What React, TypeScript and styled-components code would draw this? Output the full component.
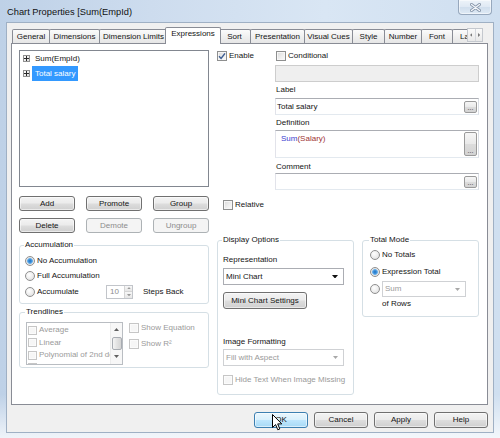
import React from "react";
import styled, { createGlobalStyle, css } from "styled-components";

const GlobalStyle = createGlobalStyle`
  html, body { margin: 0; padding: 0; background: #ffffff; }
  body {
    font-family: "Liberation Sans", Arial, sans-serif;
    font-size: 8px;
    line-height: 10px;
    color: #141414;
  }
  *, *::before, *::after { box-sizing: border-box; }
`;

const Window = styled.div`
  position: relative;
  width: 500px;
  height: 438px;
  display: flex;
  flex-direction: column;
  overflow: hidden;
  background:
    linear-gradient(180deg, rgba(255,255,255,0) 0%, rgba(255,255,255,0) 90%, rgba(255,255,255,0.75) 100%),
    linear-gradient(90deg, #bed1e7 0%, #cddcee 30%, #d9e6f4 65%, #cfdff0 100%);
`;

const TitleBar = styled.div`
  flex: none;
  height: 22px;
  display: flex;
  justify-content: space-between;
  align-items: flex-start;
  padding: 0 8px 0 7px;
`;

const TitleText = styled.span`
  font-size: 9.3px;
  line-height: 24px;
  color: #111;
`;

const CloseButton = styled.div`
  width: 34px;
  height: 15px;
  display: flex;
  align-items: center;
  justify-content: center;
  border: 1px solid #97a8bd;
  border-top: none;
  border-radius: 0 0 4px 4px;
  background: linear-gradient(180deg, #edf3f9 0%, #dfe9f4 50%, #d0deed 51%, #dfeaf5 100%);
  box-shadow: inset 0 0 0 1px rgba(255,255,255,0.5);
`;

const Client = styled.div`
  flex: 1;
  margin: 0 6px 5px 6px;
  border: 1px solid #9fb0c4;
  background: #f0f0f0;
  display: flex;
  flex-direction: column;
  padding: 4px 5px 0 4px;
`;

const TabStrip = styled.div`
  flex: none;
  height: 17px;
  margin-bottom: -1px;
  padding-left: 1px;
  display: flex;
  position: relative;
  z-index: 1;
`;

const TabList = styled.div`
  width: 455px;
  height: 17px;
  display: flex;
  align-items: flex-start;
  overflow: hidden;
`;

const Tab = styled.div<{ $w: number; $active?: boolean }>`
  flex: none;
  width: ${p => p.$w}px;
  height: 14px;
  margin-top: 2px;
  margin-right: -1px;
  border: 1px solid #898c95;
  border-bottom: none;
  border-radius: 2px 2px 0 0;
  background: linear-gradient(180deg, #fbfbfb 0%, #f0f0f0 50%, #e6e6e6 100%);
  text-align: center;
  line-height: 13px;
  white-space: nowrap;
  overflow: hidden;
  ${p => p.$active && css`
    position: relative;
    z-index: 1;
    width: ${p.$w + 4}px;
    height: 17px;
    margin: 0 -3px 0 -2px;
    background: #ffffff;
    line-height: 11px;
  `}
`;

const TabScroller = styled.div`
  flex: none;
  width: 16px;
  height: 14px;
  margin-top: 1px;
  display: flex;
  border: 1px solid #c4c8ce;
  background: linear-gradient(180deg, #fafafa, #e9e9e9);
`;

const ScrollHalf = styled.div`
  flex: 1;
  display: flex;
  align-items: center;
  justify-content: center;
  & + & { border-left: 1px solid #d4d7dc; }
`;

const TabPanel = styled.div`
  flex: none;
  height: 362px;
  border: 1px solid #898c95;
  background: #ffffff;
  padding: 6px 8px 0 7px;
  display: grid;
  grid-template-columns: 190px 137px 1fr;
  column-gap: 8px;
  row-gap: 2px;
  align-content: start;
  align-items: start;
`;

const LeftTop = styled.div`
  grid-column: 1;
  display: flex;
  flex-direction: column;
`;

const TreeBox = styled.div`
  height: 137px;
  border: 1px solid #828790;
  background: #fff;
  padding: 0 0 0 3px;
  display: flex;
  flex-direction: column;
`;

const TreeItem = styled.div`
  height: 15px;
  display: flex;
  align-items: center;
`;

const Expander = styled.span`
  flex: none;
  width: 7px;
  height: 7px;
  margin-right: 2px;
  border: 1px solid #919191;
  background: linear-gradient(135deg, #ffffff 0%, #dedede 100%);
  display: flex;
  align-items: center;
  justify-content: center;
`;

const TreeLabel = styled.span<{ $selected?: boolean }>`
  height: 15px;
  line-height: 15px;
  padding: 0 3px;
  ${p => p.$selected && css`
    background: #3399ff;
    color: #ffffff;
  `}
`;

const ButtonGrid = styled.div`
  margin-top: 9px;
  display: grid;
  grid-template-columns: repeat(3, 1fr);
  column-gap: 11px;
  row-gap: 7px;
`;

const PushButton = styled.button<{ $h?: number; $w?: number; $default?: boolean }>`
  font: inherit;
  height: ${p => p.$h ?? 15}px;
  width: ${p => (p.$w ? `${p.$w}px` : "100%")};
  padding: 0;
  border: 1px solid #707070;
  border-radius: 3px;
  color: #141414;
  background: linear-gradient(180deg, #f3f3f3 0%, #ebebeb 48%, #dddddd 52%, #cfcfcf 100%);
  box-shadow: inset 0 0 0 1px rgba(255, 255, 255, 0.55);
  position: relative;
  &:disabled {
    border-color: #adb2b5;
    background: #f4f4f4;
    color: #8c8c8c;
    box-shadow: none;
  }
  ${p => p.$default && css`
    border-color: #3c7fb1;
    background: linear-gradient(180deg, #eaf6fd 0%, #d9f0fc 48%, #bee6fd 52%, #a7d9f5 100%);
  `}
`;

const ExprColumn = styled.div`
  grid-column: 2 / 4;
  display: flex;
  flex-direction: column;
`;

const OptionRow = styled.div`
  height: 12px;
  display: grid;
  grid-template-columns: 58px 1fr;
  align-items: center;
`;

const CheckLabel = styled.label<{ $disabled?: boolean; $indent?: number }>`
  display: flex;
  align-items: center;
  gap: 2px;
  height: 10px;
  margin-left: ${p => p.$indent ?? 0}px;
  color: ${p => (p.$disabled ? "#9a9a9a" : "inherit")};
  white-space: nowrap;
`;

const CheckBox = styled.span<{ $disabled?: boolean; $size?: number }>`
  flex: none;
  width: ${p => p.$size ?? 10}px;
  height: ${p => p.$size ?? 10}px;
  border: 1px solid ${p => (p.$disabled ? "#c6c6c6" : "#8e8f8f")};
  background: ${p =>
    p.$disabled
      ? "#f6f6f6"
      : "linear-gradient(135deg, #d8d8d8 0%, #eeeeee 55%, #fbfbfb 100%)"};
  box-shadow: inset 0 0 0 1px ${p => (p.$disabled ? "#fbfbfb" : "#f6f6f6")};
  display: flex;
  align-items: center;
  justify-content: center;
`;

const FieldStack = styled.div`
  margin-left: 58px;
  display: flex;
  flex-direction: column;
`;

const DisabledField = styled.div`
  margin-top: 3px;
  height: 17px;
  border: 1px solid #cdcdcd;
  background: #efefef;
`;

const FieldLabel = styled.div<{ $mt: number }>`
  margin-top: ${p => p.$mt}px;
  height: 10px;
  padding-left: 1px;
`;

const TextField = styled.div<{ $mt: number; $h: number; $tall?: boolean }>`
  margin-top: ${p => p.$mt}px;
  height: ${p => p.$h}px;
  border: 1px solid;
  border-color: #abadb3 #dbdfe6 #e3e9ef #e2e3ea;
  background: #fff;
  display: flex;
  align-items: ${p => (p.$tall ? "stretch" : "center")};
  justify-content: space-between;
  padding: ${p => (p.$tall ? "1px 1px 1px 5px" : "0 1px 0 1px")};
`;

const FieldText = styled.span<{ $top?: number }>`
  padding-top: ${p => p.$top ?? 0}px;
  white-space: nowrap;
`;

const Keyword = styled.span`
  color: #3c3cd0;
`;

const FieldName = styled.span`
  color: #a03434;
`;

const EllipsisButton = styled.span<{ $h: number }>`
  flex: none;
  width: 13px;
  height: ${p => p.$h}px;
  align-self: center;
  border: 1px solid #9a9a9a;
  border-radius: 2px;
  background: linear-gradient(180deg, #f6f6f6 0%, #e9e9e9 50%, #dcdcdc 52%, #d3d3d3 100%);
  display: flex;
  align-items: flex-end;
  justify-content: center;
  font-size: 7px;
  line-height: 7px;
  padding-bottom: 1px;
  color: #333;
`;

const RelativeRow = styled.div`
  margin-top: 10px;
  margin-left: 6px;
`;

const LeftGroups = styled.div`
  grid-column: 1;
  margin-top: 5px;
  display: flex;
  flex-direction: column;
  gap: 3px;
`;

const GroupBox = styled.fieldset<{ $pad: string }>`
  margin: 0;
  min-width: 0;
  border: 1px solid #d5dfe5;
  border-radius: 3px;
  padding: ${p => p.$pad};
`;

const Legend = styled.legend`
  padding: 0 1px;
  margin-left: -1px;
  line-height: 10px;
`;

const RadioRow = styled.div<{ $h: number; $mt?: number }>`
  height: ${p => p.$h}px;
  margin-top: ${p => p.$mt ?? 0}px;
  display: flex;
  align-items: center;
`;

const RadioLabel = styled.label<{ $w?: number; $disabled?: boolean }>`
  display: flex;
  align-items: center;
  gap: 2px;
  flex: none;
  width: ${p => (p.$w ? `${p.$w}px` : "auto")};
  color: ${p => (p.$disabled ? "#9a9a9a" : "inherit")};
  white-space: nowrap;
`;

const Radio = styled.span<{ $on?: boolean }>`
  flex: none;
  width: 10px;
  height: 10px;
  border-radius: 50%;
  border: 1px solid #8f8f8f;
  background: ${p =>
    p.$on
      ? "radial-gradient(circle, #1f6fc0 0, #3f92dc 1.6px, #6fb3ea 2.6px, #e4e4e4 3.2px, #f6f6f6 100%)"
      : "radial-gradient(circle at 40% 35%, #ffffff 0%, #ececec 55%, #d6d6d6 100%)"};
`;

const SpinBox = styled.div`
  width: 27px;
  height: 14px;
  border: 1px solid #c2c5ca;
  background: #fff;
  display: flex;
  color: #8d8d8d;
`;

const SpinValue = styled.span`
  flex: 1;
  padding-left: 3px;
  line-height: 12px;
`;

const SpinButtons = styled.div`
  width: 8px;
  display: flex;
  flex-direction: column;
  border-left: 1px solid #d5d5d5;
`;

const SpinHalf = styled.div`
  flex: 1;
  display: flex;
  align-items: center;
  justify-content: center;
  background: linear-gradient(180deg, #f7f7f7, #e6e6e6);
  & + & { border-top: 1px solid #d5d5d5; }
`;

const StepsText = styled.span`
  margin-left: 10px;
`;

const TrendRow = styled.div`
  display: flex;
  align-items: flex-start;
`;

const TrendList = styled.div`
  flex: none;
  width: 97px;
  height: 43px;
  border: 1px solid #b9bdc2;
  background: #fff;
  display: flex;
  overflow: hidden;
`;

const TrendItems = styled.div`
  flex: 1;
  min-width: 0;
  padding: 1px 0 0 1px;
  display: flex;
  flex-direction: column;
  overflow: hidden;
`;

const TrendItem = styled.div`
  flex: none;
  height: 12.5px;
  display: flex;
  align-items: center;
  gap: 2px;
  color: #9a9a9a;
  white-space: nowrap;
`;

const ScrollBar = styled.div`
  flex: none;
  width: 12px;
  display: flex;
  flex-direction: column;
  align-items: center;
  background: #f7f7f7;
  border-left: 1px solid #ececec;
`;

const ScrollArrow = styled.div<{ $h: number }>`
  height: ${p => p.$h}px;
  width: 100%;
  display: flex;
  align-items: center;
  justify-content: center;
`;

const ScrollThumb = styled.div`
  width: 10px;
  height: 13px;
  margin-top: 2px;
  border: 1px solid #a8acb2;
  border-radius: 2px;
  background: linear-gradient(90deg, #f4f4f4 0%, #e2e2e2 50%, #d4d4d4 100%);
`;

const TrendChecks = styled.div`
  margin-left: 6px;
  padding-top: 1px;
  display: flex;
  flex-direction: column;
  gap: 6px;
`;

const DisplayGroup = styled(GroupBox)`
  grid-column: 2;
`;

const TotalGroup = styled(GroupBox)`
  grid-column: 3;
`;

const SectionLabel = styled.div<{ $mt: number }>`
  margin-top: ${p => p.$mt}px;
  height: 10px;
`;

const Select = styled.div<{ $w: number; $h: number; $mt?: number; $disabled?: boolean }>`
  width: ${p => p.$w}px;
  height: ${p => p.$h}px;
  margin-top: ${p => p.$mt ?? 0}px;
  border: 1px solid ${p => (p.$disabled ? "#cfd1d4" : "#abadb3")};
  background: #fff;
  display: flex;
  align-items: center;
  justify-content: space-between;
  padding: 0 5px 0 2px;
  color: ${p => (p.$disabled ? "#9a9a9a" : "inherit")};
`;

const BlockSpacer = styled.div<{ $mt: number }>`
  margin-top: ${p => p.$mt}px;
`;

const TotalSelectRow = styled.div`
  margin-top: 4px;
  height: 16px;
  display: flex;
  align-items: center;
  gap: 2px;
`;

const OfRows = styled.div`
  margin-top: 2px;
  height: 10px;
  padding-left: 12px;
`;

const Footer = styled.div`
  flex: none;
  margin-top: 7px;
  display: flex;
  justify-content: flex-end;
  gap: 6px;
`;

const Cursor = styled.svg`
  position: absolute;
  left: 17px;
  top: 1px;
  pointer-events: none;
`;

const tabs: { label: string; w: number }[] = [
  { label: "General", w: 38 },
  { label: "Dimensions", w: 51 },
  { label: "Dimension Limits", w: 69 },
  { label: "Expressions", w: 52 },
  { label: "Sort", w: 33 },
  { label: "Presentation", w: 55 },
  { label: "Visual Cues", w: 49 },
  { label: "Style", w: 33 },
  { label: "Number", w: 38 },
  { label: "Font", w: 32 },
  { label: "Layout", w: 40 },
];

const CheckMark = () => (
  <svg width="8" height="8" viewBox="0 0 8 8">
    <path d="M1 4.2 L3.1 6.4 L7 1.4" fill="none" stroke="#3f5f93" strokeWidth="1.5" />
  </svg>
);

const PlusGlyph = () => (
  <svg width="5" height="5" viewBox="0 0 5 5">
    <path d="M0 2.5 H5 M2.5 0 V5" stroke="#2b2b2b" strokeWidth="1" />
  </svg>
);

const Tri = ({ dir, color = "#4a4a4a", size = 5 }: { dir: "up" | "down" | "left" | "right"; color?: string; size?: number }) => {
  const h = size * 0.6;
  const pts =
    dir === "down"
      ? `0,0 ${size},0 ${size / 2},${h}`
      : dir === "up"
      ? `0,${h} ${size},${h} ${size / 2},0`
      : dir === "left"
      ? `${h},0 ${h},${size} 0,${size / 2}`
      : `0,0 0,${size} ${h},${size / 2}`;
  const w = dir === "up" || dir === "down" ? size : h;
  const hh = dir === "up" || dir === "down" ? h : size;
  return (
    <svg width={w} height={hh} viewBox={`0 0 ${w} ${hh}`}>
      <polygon points={pts} fill={color} />
    </svg>
  );
};

export default function App() {
  return (
    <>
      <GlobalStyle />
      <Window>
        <TitleBar>
          <TitleText>Chart Properties [Sum(EmpId)</TitleText>
          <CloseButton>
            <svg width="11" height="9" viewBox="0 0 11 9">
              <path d="M1.5 1.5 L9.5 7.5 M9.5 1.5 L1.5 7.5" stroke="#8796aa" strokeWidth="3" strokeLinecap="round" />
              <path d="M1.5 1.5 L9.5 7.5 M9.5 1.5 L1.5 7.5" stroke="#f4f7fb" strokeWidth="1.3" strokeLinecap="round" />
            </svg>
          </CloseButton>
        </TitleBar>

        <Client>
          <TabStrip>
            <TabList>
              {tabs.map(t => (
                <Tab key={t.label} $w={t.w} $active={t.label === "Expressions"}>
                  {t.label}
                </Tab>
              ))}
            </TabList>
            <TabScroller>
              <ScrollHalf>
                <Tri dir="left" color="#7a7a7a" size={4} />
              </ScrollHalf>
              <ScrollHalf>
                <Tri dir="right" color="#7a7a7a" size={4} />
              </ScrollHalf>
            </TabScroller>
          </TabStrip>

          <TabPanel>
            <LeftTop>
              <TreeBox>
                <TreeItem>
                  <Expander>
                    <PlusGlyph />
                  </Expander>
                  <TreeLabel>Sum(EmpId)</TreeLabel>
                </TreeItem>
                <TreeItem>
                  <Expander>
                    <PlusGlyph />
                  </Expander>
                  <TreeLabel $selected>Total salary</TreeLabel>
                </TreeItem>
              </TreeBox>
              <ButtonGrid>
                <PushButton>Add</PushButton>
                <PushButton>Promote</PushButton>
                <PushButton>Group</PushButton>
                <PushButton>Delete</PushButton>
                <PushButton disabled>Demote</PushButton>
                <PushButton disabled>Ungroup</PushButton>
              </ButtonGrid>
            </LeftTop>

            <ExprColumn>
              <OptionRow>
                <CheckLabel>
                  <CheckBox>
                    <CheckMark />
                  </CheckBox>
                  Enable
                </CheckLabel>
                <CheckLabel $indent={1}>
                  <CheckBox />
                  Conditional
                </CheckLabel>
              </OptionRow>
              <FieldStack>
                <DisabledField />
                <FieldLabel $mt={3}>Label</FieldLabel>
                <TextField $mt={3} $h={17}>
                  <FieldText>Total salary</FieldText>
                  <EllipsisButton $h={12}>...</EllipsisButton>
                </TextField>
                <FieldLabel $mt={3}>Definition</FieldLabel>
                <TextField $mt={2} $h={28} $tall>
                  <FieldText $top={2}>
                    <Keyword>Sum</Keyword>
                    <FieldName>(Salary)</FieldName>
                  </FieldText>
                  <EllipsisButton $h={24}>...</EllipsisButton>
                </TextField>
                <FieldLabel $mt={4}>Comment</FieldLabel>
                <TextField $mt={1} $h={17}>
                  <FieldText />
                  <EllipsisButton $h={12}>...</EllipsisButton>
                </TextField>
              </FieldStack>
              <RelativeRow>
                <CheckLabel>
                  <CheckBox />
                  Relative
                </CheckLabel>
              </RelativeRow>
            </ExprColumn>

            <LeftGroups>
              <GroupBox $pad="3px 5px 3px 5px">
                <Legend>Accumulation</Legend>
                <RadioRow $h={15}>
                  <RadioLabel>
                    <Radio $on />
                    No Accumulation
                  </RadioLabel>
                </RadioRow>
                <RadioRow $h={15}>
                  <RadioLabel>
                    <Radio />
                    Full Accumulation
                  </RadioLabel>
                </RadioRow>
                <RadioRow $h={17}>
                  <RadioLabel $w={81}>
                    <Radio />
                    Accumulate
                  </RadioLabel>
                  <SpinBox>
                    <SpinValue>10</SpinValue>
                    <SpinButtons>
                      <SpinHalf>
                        <Tri dir="up" color="#9a9a9a" size={4} />
                      </SpinHalf>
                      <SpinHalf>
                        <Tri dir="down" color="#9a9a9a" size={4} />
                      </SpinHalf>
                    </SpinButtons>
                  </SpinBox>
                  <StepsText>Steps Back</StepsText>
                </RadioRow>
              </GroupBox>

              <GroupBox $pad="5px 5px 2px 6px">
                <Legend>Trendlines</Legend>
                <TrendRow>
                  <TrendList>
                    <TrendItems>
                      {["Average", "Linear", "Polynomial of 2nd degree", "Polynomial of 3rd degree"].map(t => (
                        <TrendItem key={t}>
                          <CheckBox $disabled $size={9} />
                          {t}
                        </TrendItem>
                      ))}
                    </TrendItems>
                    <ScrollBar>
                      <ScrollArrow $h={12}>
                        <Tri dir="up" color="#606060" size={5} />
                      </ScrollArrow>
                      <ScrollThumb />
                      <ScrollArrow $h={12}>
                        <Tri dir="down" color="#606060" size={5} />
                      </ScrollArrow>
                    </ScrollBar>
                  </TrendList>
                  <TrendChecks>
                    <CheckLabel $disabled>
                      <CheckBox $disabled />
                      Show Equation
                    </CheckLabel>
                    <CheckLabel $disabled>
                      <CheckBox $disabled />
                      Show R²
                    </CheckLabel>
                  </TrendChecks>
                </TrendRow>
              </GroupBox>
            </LeftGroups>

            <DisplayGroup $pad="0 5px 9px 5px">
              <Legend>Display Options</Legend>
              <SectionLabel $mt={10}>Representation</SectionLabel>
              <Select $w={121} $h={17} $mt={3}>
                <span>Mini Chart</span>
                <Tri dir="down" color="#111" size={6} />
              </Select>
              <BlockSpacer $mt={7}>
                <PushButton $w={84} $h={17}>
                  Mini Chart Settings
                </PushButton>
              </BlockSpacer>
              <SectionLabel $mt={28}>Image Formatting</SectionLabel>
              <Select $w={121} $h={17} $mt={2} $disabled>
                <span>Fill with Aspect</span>
                <Tri dir="down" color="#a8a8a8" size={5} />
              </Select>
              <BlockSpacer $mt={9}>
                <CheckLabel $disabled>
                  <CheckBox $disabled />
                  Hide Text When Image Missing
                </CheckLabel>
              </BlockSpacer>
            </DisplayGroup>

            <TotalGroup $pad="0 4px 7px 7px">
              <Legend>Total Mode</Legend>
              <RadioRow $h={10} $mt={5}>
                <RadioLabel>
                  <Radio />
                  No Totals
                </RadioLabel>
              </RadioRow>
              <RadioRow $h={10} $mt={7}>
                <RadioLabel>
                  <Radio $on />
                  Expression Total
                </RadioLabel>
              </RadioRow>
              <TotalSelectRow>
                <Radio />
                <Select $w={84} $h={16} $disabled>
                  <span>Sum</span>
                  <Tri dir="down" color="#a8a8a8" size={5} />
                </Select>
              </TotalSelectRow>
              <OfRows>of Rows</OfRows>
            </TotalGroup>
          </TabPanel>

          <Footer>
            <PushButton $w={54} $h={16} $default>
              OK
              <Cursor width="11" height="17" viewBox="0 0 11 17">
                <path d="M0.5 0.5 L0.5 13.5 L3.6 10.6 L5.8 15.8 L7.8 15 L5.7 9.9 L9.8 9.9 Z" fill="#ffffff" stroke="#000000" strokeWidth="1" strokeLinejoin="round" />
              </Cursor>
            </PushButton>
            <PushButton $w={54} $h={16}>Cancel</PushButton>
            <PushButton $w={54} $h={16}>Apply</PushButton>
            <PushButton $w={54} $h={16}>Help</PushButton>
          </Footer>
        </Client>
      </Window>
    </>
  );
}
